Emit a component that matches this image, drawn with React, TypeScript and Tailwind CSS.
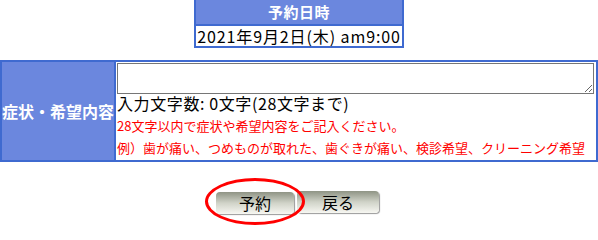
import React from "react";

const jp = { fontFamily: '"Noto Sans CJK JP", "Noto Sans", sans-serif' };

function GreenButton({ label, width }: { label: string; width: string }) {
    return (
        <button
            type="button"
            className={`${width} h-[22px] rounded-[4px] bg-gradient-to-b from-[#8f9485] via-[#d0d3c8] to-[#f7f7f2] text-[16px] leading-[22px] text-black shadow-[1px_1px_1px_#9a9a9a]`}
        >
            {label}
        </button>
    );
}

export default function App() {
    return (
        <div className="w-[598px] h-[231px] bg-white overflow-hidden" style={jp}>
            {/* 予約日時 */}
            <div className="mx-auto w-[210px] border-x-2 border-b-2 border-[#3f6ad0]">
                <div className="h-[26px] bg-[#6b87de] border-b-2 border-[#3f6ad0] flex items-center justify-center text-white font-bold text-[15px] tracking-[0.5px]">
                    予約日時
                </div>
                <div className="h-[20px] flex items-center justify-center text-[16px] text-black whitespace-nowrap tracking-[0.9px]">
                    2021年9月2日(木) am9:00
                </div>
            </div>

            {/* 症状・希望内容 */}
            <div className="mt-[12px] w-[598px] border-2 border-[#3f6ad0] flex">
                <div className="w-[114px] h-[98px] bg-[#6b87de] border-r-2 border-[#3f6ad0] flex items-center justify-center text-white font-bold text-[16px] whitespace-nowrap">
                    症状・希望内容
                </div>
                <div className="flex-1 pl-[1px] pt-[1px]">
                    <textarea
                        className="block w-[477px] h-[31px] border border-[#767676] bg-white outline-none"
                        defaultValue=""
                    />
                    <div className="text-[16px] leading-[18px] text-black whitespace-nowrap tracking-[0.6px]">
                        入力文字数: 0文字(28文字まで)
                    </div>
                    <div className="pt-[3px] text-[13px] leading-[22px] text-[#ff0000] whitespace-nowrap">
                        <div>28文字以内で症状や希望内容をご記入ください。</div>
                        <div>例）歯が痛い、つめものが取れた、歯ぐきが痛い、検診希望、クリーニング希望</div>
                    </div>
                </div>
            </div>

            {/* buttons */}
            <div className="mt-[29px] flex justify-center gap-[3px] pr-[3px]">
                <div className="relative">
                    <GreenButton label="予約" width="w-[78px]" />
                    <div className="absolute left-[-11px] top-[-13px] w-[100px] h-[47px] rounded-[50%] border-[3px] border-[#ff0000] pointer-events-none" />
                </div>
                <GreenButton label="戻る" width="w-[82px]" />
            </div>
        </div>
    );
}
